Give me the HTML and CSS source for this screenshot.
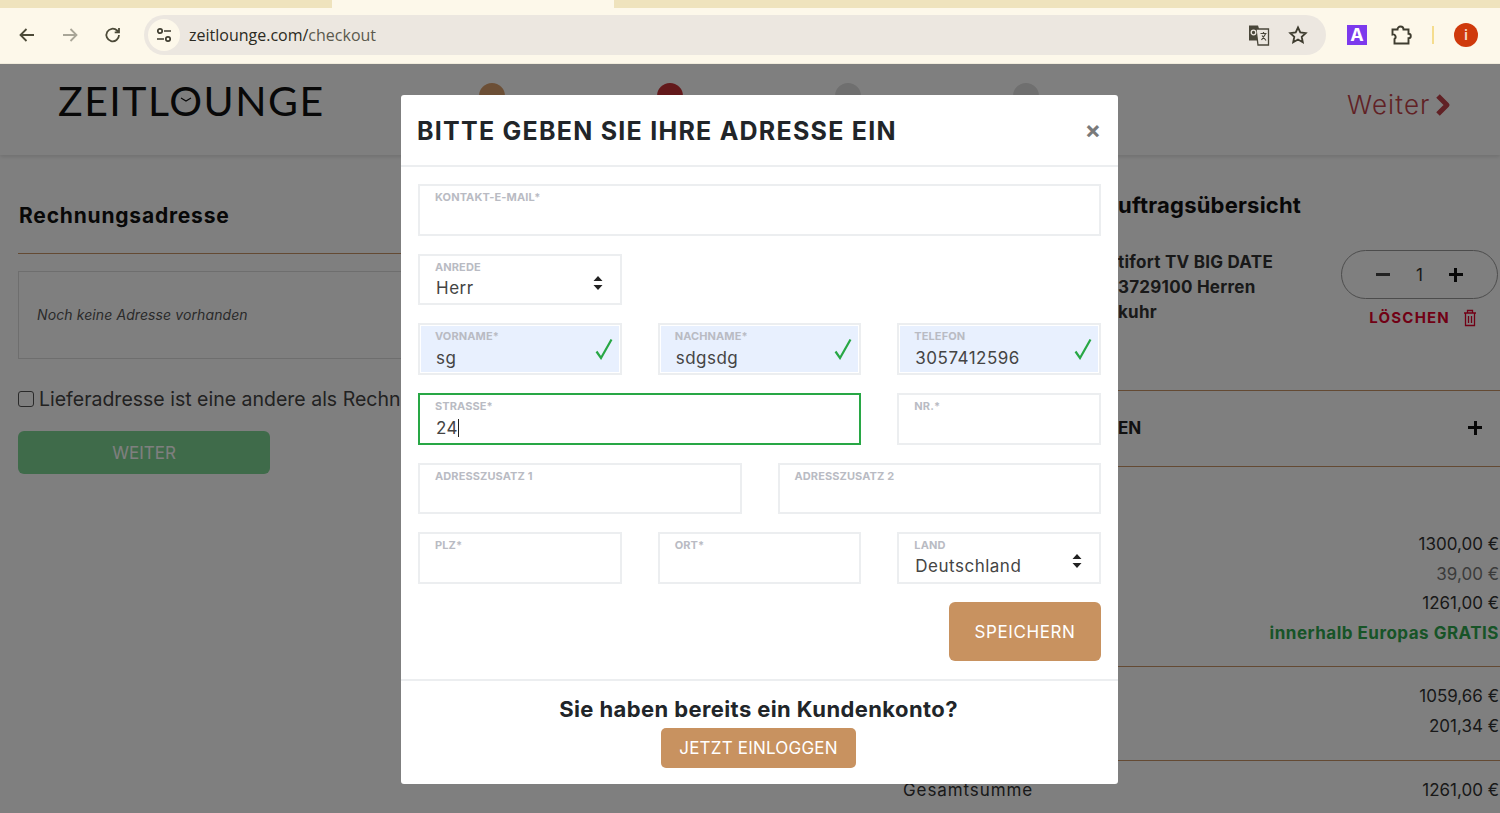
FILE: index.html
```html
<!DOCTYPE html>
<html lang="de">
<head>
    <meta charset="UTF-8" />
    <title>Zeitlounge Checkout</title>
    <link rel="stylesheet" href="styles.css">
</head>
<body>
    <div class="tabstrip"><div class="tab-active"></div></div>

    <nav class="toolbar">
        <svg class="nav-icon" viewBox="0 0 20 20"><path d="M17 10H4M9.500 4 3.500 10l6 6" /></svg>
        <svg class="nav-icon nav-off" viewBox="0 0 20 20"><path d="M3 10h13M10.500 4l6 6-6 6" /></svg>
        <svg class="nav-icon" viewBox="0 0 20 20"><path d="M16 10a6.300 6.300 0 1 1-1.900-4.500L16 7.300M16 3v4.300h-4.300" /></svg>
        <div class="omnibox">
            <span class="site-btn">
                <svg class="site-icon" viewBox="0 0 18 18"><circle cx="5" cy="5" r="2.200" /><path d="M9 5h7M2 13h7" /><circle cx="13" cy="13" r="2.200" /></svg>
            </span>
            <span class="url">zeitlounge.com/<span class="url-path">checkout</span></span>
            <svg class="translate-icon" viewBox="0 0 22 22">
                <path class="tr-back" d="M1 1.500h9l1 3v12H1z" />
                <path class="tr-front" d="M8 5h12.500v16H10z" />
                <path class="tr-line" d="M12.500 9.500h6M15.500 8v1.500M13.500 16l4-6M14 11.500l4 5" />
                <circle class="tr-g" cx="5.500" cy="8.500" r="2.300" />
            </svg>
            <svg class="star-icon" viewBox="0 0 20 20"><path d="M10 2.500l2.300 5 5.400.6-4 3.700 1.100 5.400L10 14.500l-4.800 2.700 1.100-5.400-4-3.700 5.400-.6z" /></svg>
        </div>
        <span class="ext-a">A</span>
        <svg class="puzzle-icon" viewBox="0 0 22 22"><path d="M2.500 5.500h5a3 3 0 0 1 6 0h5v4.200a2.300 2.300 0 0 1 0 4.600v5.200h-14v-4.500a2.500 2.500 0 0 0-2-4.500z" /></svg>
        <span class="toolbar-sep"></span>
        <span class="avatar">i</span>
    </nav>

    <div class="viewport">
        <header class="site-header">
            <div class="logo">ZEITL<span class="logo-o">O<svg class="logo-hands" viewBox="0 0 12 6"><path d="M1 1l5 3 5-3" /></svg></span>UNGE</div>
            <div class="steps">
                <span class="step step-done"></span>
                <span class="step step-current"></span>
                <span class="step"></span>
                <span class="step"></span>
            </div>
            <a class="next-link">Weiter
                <svg class="next-icon" viewBox="0 0 16 24"><path d="M3 3l9 9-9 9" /></svg>
            </a>
        </header>

        <main class="checkout">
            <section class="col-left">
                <h2 class="col-title">Rechnungsadresse</h2>
                <hr class="rule rule-address">
                <div class="address-box">Noch keine Adresse vorhanden</div>
                <label class="ship-check"><span class="checkbox"></span>Lieferadresse ist eine andere als Rechn</label>
                <button class="btn-next">WEITER</button>
            </section>

            <section class="col-right">
                <h2 class="summary-title">uftragsübersicht</h2>
                <div class="cart-item">
                    <div class="item-name">tifort TV BIG DATE<br>3729100 Herren<br>kuhr</div>
                    <div class="item-actions">
                        <div class="qty"><span class="qty-minus"></span><span class="qty-num">1</span><span class="qty-plus"></span></div>
                        <div class="remove">LÖSCHEN
                            <svg class="trash" viewBox="0 0 16 18"><path d="M2 4h12M5.500 4V1.500h5V4M3.500 4v12.500h9V4M6.500 7v7M9.500 7v7" /></svg>
                        </div>
                    </div>
                </div>
                <hr class="rule">
                <div class="coupon"><span>EN</span><span class="qty-plus coupon-plus"></span></div>
                <hr class="rule">
                <div class="totals totals-first">
                    <div class="amount">1300,00 €</div>
                    <div class="amount amount-muted">39,00 €</div>
                    <div class="amount">1261,00 €</div>
                    <div class="amount amount-free">innerhalb Europas GRATIS</div>
                </div>
                <hr class="rule">
                <div class="totals totals-tax">
                    <div class="amount">1059,66 €</div>
                    <div class="amount">201,34 €</div>
                </div>
                <hr class="rule">
                <div class="grand"><span class="grand-label">Gesamtsumme</span><span>1261,00 €</span></div>
            </section>
        </main>

        <div class="overlay">
            <div class="modal">
                <div class="modal-head">
                    <h1>BITTE GEBEN SIE IHRE ADRESSE EIN</h1>
                    <span class="close">×</span>
                </div>
                <form class="modal-form">
                    <div class="field span-6"><span class="field-label">KONTAKT-E-MAIL*</span></div>
                    <div class="field span-2 field-select"><span class="field-label">ANREDE</span><span class="field-value">Herr</span>
                        <svg class="sort" viewBox="0 0 10 14"><path d="M5 0l4.500 5h-9zM5 14 .5 9h9z" /></svg>
                    </div>
                    <div class="row-break"></div>
                    <div class="field span-2 field-ok"><span class="field-label">VORNAME*</span><span class="field-value">sg</span>
                        <svg class="tick" viewBox="0 0 18 22"><path d="M1.500 13.500 6 20 16.500 1.500" /></svg>
                    </div>
                    <div class="field span-2 field-ok"><span class="field-label">NACHNAME*</span><span class="field-value">sdgsdg</span>
                        <svg class="tick" viewBox="0 0 18 22"><path d="M1.500 13.500 6 20 16.500 1.500" /></svg>
                    </div>
                    <div class="field span-2 field-ok"><span class="field-label">TELEFON</span><span class="field-value">3057412596</span>
                        <svg class="tick" viewBox="0 0 18 22"><path d="M1.500 13.500 6 20 16.500 1.500" /></svg>
                    </div>
                    <div class="field span-4 field-focus"><span class="field-label">STRASSE*</span><span class="field-value">24<span class="caret"></span></span></div>
                    <div class="field span-2"><span class="field-label">NR.*</span></div>
                    <div class="field span-3"><span class="field-label">ADRESSZUSATZ 1</span></div>
                    <div class="field span-3"><span class="field-label">ADRESSZUSATZ 2</span></div>
                    <div class="field span-2"><span class="field-label">PLZ*</span></div>
                    <div class="field span-2"><span class="field-label">ORT*</span></div>
                    <div class="field span-2 field-select"><span class="field-label">LAND</span><span class="field-value">Deutschland</span>
                        <svg class="sort" viewBox="0 0 10 14"><path d="M5 0l4.500 5h-9zM5 14 .5 9h9z" /></svg>
                    </div>
                    <div class="form-actions"><button type="button" class="btn-save">SPEICHERN</button></div>
                </form>
                <div class="modal-foot">
                    <h3>Sie haben bereits ein Kundenkonto?</h3>
                    <button type="button" class="btn-login">JETZT EINLOGGEN</button>
                </div>
            </div>
        </div>
    </div>
</body>
</html>
```

FILE: styles.css
```css
* {
    box-sizing: border-box;
}

html, body {
    margin: 0;
    padding: 0;
    height: 813px;
    overflow: hidden;
}

body {
    font-family: Inter, "Open Sans", sans-serif;
    background: #fff;
    color: #222;
}

/* browser chrome */
.tabstrip {
    height: 8px;
    background: #efe3bd;
}

.tab-active {
    width: 282px;
    height: 8px;
    margin-left: 332px;
    background: #fdf8ea;
}

.toolbar {
    height: 56px;
    background: #fdf8ea;
    display: flex;
    align-items: center;
    padding: 0 22px 2px 17px;
    border-bottom: 1px solid #f1ecdc;
}

.nav-icon {
    width: 20px;
    height: 20px;
    margin-right: 23px;
    fill: none;
    stroke: #4c4a38;
    stroke-width: 1.800;
}

.nav-off {
    stroke: #a9a698;
}

.omnibox {
    width: 1182px;
    height: 40px;
    margin-left: -2px;
    background: #ece7e0;
    border-radius: 20px;
    display: flex;
    align-items: center;
    padding: 0 18px 0 4px;
}

.site-btn {
    width: 32px;
    height: 32px;
    border-radius: 50%;
    background: #fdf8ea;
    display: flex;
    align-items: center;
    justify-content: center;
    margin-right: 9px;
}

.site-icon {
    width: 18px;
    height: 18px;
    fill: none;
    stroke: #3f3d30;
    stroke-width: 1.700;
}

.url {
    flex: 1;
    font-family: "Open Sans", sans-serif;
    font-size: 16px;
    color: #2b2a22;
}

.url-path {
    color: #5b594d;
}

.translate-icon {
    width: 22px;
    height: 22px;
    margin-right: 18px;
}

.tr-back {
    fill: #4a473a;
}

.tr-front {
    fill: #ece7e0;
    stroke: #4a473a;
    stroke-width: 1.300;
}

.tr-line {
    fill: none;
    stroke: #4a473a;
    stroke-width: 1.200;
}

.tr-g {
    fill: none;
    stroke: #ece7e0;
    stroke-width: 1.300;
}

.star-icon {
    width: 20px;
    height: 20px;
    fill: none;
    stroke: #3f3d30;
    stroke-width: 1.800;
}

.ext-a {
    width: 20px;
    height: 20px;
    margin-left: 21px;
    background: #7c3aed;
    color: #fff;
    font-size: 18px;
    font-weight: 700;
    display: flex;
    align-items: center;
    justify-content: center;
}

.puzzle-icon {
    width: 22px;
    height: 22px;
    margin-left: 23px;
    fill: none;
    stroke: #3f3d30;
    stroke-width: 1.900;
}

.toolbar-sep {
    width: 2px;
    height: 18px;
    margin-left: 20px;
    background: #f5dd8e;
}

.avatar {
    width: 24px;
    height: 24px;
    margin-left: 20px;
    border-radius: 50%;
    background: #cf3a0c;
    color: #f6d7c8;
    font-size: 13px;
    font-weight: 700;
    display: flex;
    align-items: center;
    justify-content: center;
}

/* page behind the dialog */
.viewport {
    position: relative;
    height: 749px;
    overflow: hidden;
}

.site-header {
    height: 91px;
    display: flex;
    align-items: flex-start;
    padding-left: 58px;
    box-shadow: 0 2px 4px rgba(0,0,0,0.12);
}

.logo {
    width: 420px;
    margin-top: 13px;
    font-family: Lato, sans-serif;
    font-size: 41px;
    line-height: 48px;
    letter-spacing: 1.500px;
    color: #111;
}

.logo-o {
    position: relative;
}

.logo-hands {
    position: absolute;
    left: 11px;
    top: 21px;
    width: 12px;
    height: 6px;
    fill: none;
    stroke: #111;
    stroke-width: 1.200;
}

.steps {
    display: flex;
    gap: 152px;
    margin-top: 19px;
    width: 869px;
    padding-left: 1px;
}

.step {
    width: 26px;
    height: 26px;
    border-radius: 50%;
    background: #dedede;
}

.step-done {
    background: #d99f6c;
}

.step-current {
    background: #c73236;
}

.next-link {
    display: flex;
    align-items: center;
    gap: 4px;
    margin-top: 24px;
    font-family: Inter, sans-serif;
    font-size: 26px;
    font-weight: 300;
    line-height: 34px;
    letter-spacing: 1.100px;
    color: #c2434a;
    white-space: nowrap;
}

.next-icon {
    width: 16px;
    height: 24px;
    fill: none;
    stroke: #c2434a;
    stroke-width: 5;
    stroke-linejoin: round;
}

.checkout {
    display: flex;
}

.col-left {
    width: 903px;
    padding: 49px 23px 0 18px;
}

.col-title {
    margin: 0;
    padding-left: 1px;
    font-size: 21px;
    line-height: 24px;
    font-weight: 700;
    letter-spacing: 0.800px;
    color: #111;
}

.rule {
    margin: 0;
    border: 0;
    height: 1px;
    background: #c89566;
}

.rule-address {
    margin-top: 25px;
}

.address-box {
    height: 88px;
    margin-top: 17px;
    padding: 0 0 2px 18px;
    display: flex;
    align-items: center;
    border: 1px solid #ddd;
    font-size: 14px;
    font-style: italic;
    letter-spacing: 0.100px;
    color: #555;
}

.ship-check {
    display: flex;
    align-items: center;
    margin-top: 28px;
    font-size: 19.500px;
    line-height: 24px;
    color: #444;
    white-space: nowrap;
}

.checkbox {
    width: 16px;
    height: 16px;
    margin-right: 5px;
    border: 1px solid #555;
    border-radius: 3px;
    background: #fff;
}

.btn-next {
    display: block;
    width: 252px;
    height: 43px;
    margin-top: 20px;
    background: #7ed695;
    border: none;
    border-radius: 6px;
    font-family: inherit;
    font-size: 17px;
    color: #fff;
}

.col-right {
    width: 597px;
    flex: none;
}

.summary-title {
    margin: 37px 0 0;
    padding-left: 215px;
    font-size: 22px;
    line-height: 26px;
    font-weight: 700;
    letter-spacing: 0.200px;
    white-space: nowrap;
    color: #111;
}

.cart-item {
    display: flex;
    height: 172px;
    padding: 32px 0 0 215px;
}

.item-name {
    width: 223px;
    font-size: 17px;
    line-height: 25px;
    font-weight: 700;
    letter-spacing: 0.250px;
    color: #333;
    white-space: nowrap;
}

.item-actions {
    width: 157px;
}

.qty {
    height: 49px;
    border: 1px solid #999;
    border-radius: 25px;
    display: flex;
    align-items: center;
    justify-content: center;
    gap: 26px;
}

.qty-minus {
    width: 14px;
    height: 3px;
    background: #444;
}

.qty-num {
    font-size: 17px;
    color: #333;
}

.qty-plus {
    position: relative;
    display: block;
    width: 14px;
    height: 14px;
    background: linear-gradient(#111, #111) center/14px 3px no-repeat,
                linear-gradient(#111, #111) center/3px 14px no-repeat;
}

.remove {
    display: flex;
    align-items: center;
    justify-content: flex-end;
    gap: 12px;
    margin-top: 8px;
    padding-right: 20px;
    font-size: 15px;
    line-height: 22px;
    font-weight: 700;
    letter-spacing: 1.200px;
    color: #e3002b;
}

.trash {
    width: 16px;
    height: 18px;
    fill: none;
    stroke: #e3002b;
    stroke-width: 1.300;
}

.coupon {
    height: 75px;
    display: flex;
    align-items: center;
    justify-content: space-between;
    padding: 0 18px 2px 215px;
    font-size: 17px;
    font-weight: 700;
}

.totals {
    text-align: right;
}

.amount {
    font-size: 17px;
    line-height: 29.500px;
    color: #333;
    white-space: nowrap;
}

.amount-muted {
    color: #777;
}

.amount-free {
    font-weight: 700;
    letter-spacing: 0.500px;
    color: #2fa84f;
}

.totals-first {
    padding: 63px 1px 18px 0;
}

.totals-tax {
    padding: 15px 1px 19px 0;
}

.grand {
    display: flex;
    justify-content: space-between;
    padding: 15px 1px 0 0;
    font-size: 17px;
    line-height: 29px;
    color: #333;
}

.grand-label {
    letter-spacing: 0.900px;
}

/* address dialog */
.overlay {
    position: absolute;
    inset: 0;
    background: rgba(0,0,0,0.5);
    display: flex;
    justify-content: center;
    padding: 31px 0 0 19px;
}

.modal {
    width: 717px;
    height: 689px;
    background: #fff;
    border-radius: 3px;
}

.modal-head {
    height: 72px;
    display: flex;
    align-items: center;
    justify-content: space-between;
    padding: 2px 17px 0 16px;
    border-bottom: 2px solid #eceef0;
}

.modal-head h1 {
    margin: 0;
    font-size: 25px;
    font-weight: 700;
    letter-spacing: 1.250px;
    color: #212529;
    white-space: nowrap;
}

.close {
    margin-top: -2px;
    font-size: 24px;
    line-height: 24px;
    font-weight: 700;
    color: #7a7a7a;
}

.modal-form {
    display: grid;
    grid-template-columns: repeat(6, 1fr);
    grid-auto-rows: 51.500px;
    column-gap: 36px;
    row-gap: 18.200px;
    padding: 17px 17px 0 17px;
    height: 514px;
    border-bottom: 2px solid #eceef0;
}

.span-2 {
    grid-column: span 2;
}

.span-3 {
    grid-column: span 3;
}

.span-4 {
    grid-column: span 4;
}

.span-6 {
    grid-column: span 6;
}

.row-break {
    grid-column: span 4;
}

.field {
    position: relative;
    display: flex;
    flex-direction: column;
    padding: 4px 15px 0 15px;
    border: 2px solid #eceef0;
    background: #fff;
}

.field-label {
    font-size: 11px;
    line-height: 14px;
    font-weight: 700;
    letter-spacing: 0.100px;
    color: #b9bbc3;
    white-space: nowrap;
}

.field-value {
    margin: 3px 0 0 1px;
    font-size: 17px;
    line-height: 24px;
    letter-spacing: 0.500px;
    color: #444;
}

.field-select .field-value {
    margin-top: 2px;
}

.field-ok {
    background: #e8f0fe;
    box-shadow: inset 0 0 0 1px #fff;
}

.field-focus {
    border-color: #28a745;
}

.caret {
    display: inline-block;
    width: 1px;
    height: 18px;
    vertical-align: -3px;
    background: #222;
}

.tick {
    position: absolute;
    right: 7px;
    top: 13px;
    width: 18px;
    height: 22px;
    fill: none;
    stroke: #28a745;
    stroke-width: 2.200;
}

.sort {
    position: absolute;
    right: 17px;
    top: 20px;
    width: 10px;
    height: 14px;
    fill: #222;
}

.form-actions {
    grid-column: span 6;
    display: flex;
    justify-content: flex-end;
    height: 59px;
}

.btn-save {
    width: 152px;
    height: 59px;
    background: #c89260;
    border: none;
    border-radius: 6px;
    font-family: inherit;
    font-size: 17px;
    letter-spacing: 0.600px;
    color: #fff;
}

.modal-foot {
    display: flex;
    flex-direction: column;
    align-items: center;
    padding: 15px 2px 0 0;
}

.modal-foot h3 {
    margin: 0 0 6px;
    font-size: 22px;
    line-height: 26px;
    font-weight: 700;
    letter-spacing: 0.400px;
    color: #212529;
}

.btn-login {
    width: 195px;
    height: 40px;
    background: #c89260;
    border: none;
    border-radius: 5px;
    font-family: inherit;
    font-size: 17px;
    letter-spacing: 0.200px;
    color: #fff;
}
```
